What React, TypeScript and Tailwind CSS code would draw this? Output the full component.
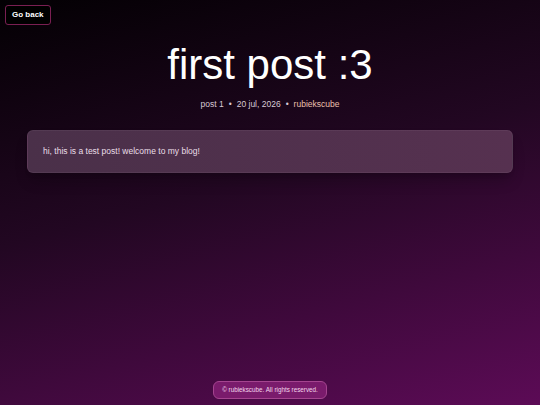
export default function App() {
  return (
    <div className="flex min-h-screen flex-col bg-[linear-gradient(165deg,#030003_0%,#220722_45%,#5c0b56_100%)] font-['Liberation_Sans',Arial,sans-serif] text-white">
      <div className="px-[5px] pt-[5px]">
        <button className="flex h-[20px] items-center rounded-[3px] border border-[#7a1f52] bg-black px-[6px] text-[8px] font-bold text-white">
          Go back
        </button>
      </div>

      <main className="flex flex-1 flex-col items-center px-[27px]">
        <h1 className="mt-[19px] text-[42px] leading-none text-white">first post :3</h1>

        <div className="mt-[12px] flex items-center gap-[5px] text-[8.5px] leading-[12px] text-[#d8cad5]">
          <span>post 1</span>
          <span>•</span>
          <span>20 jul, 2026</span>
          <span>•</span>
          <span className="text-[#ecc0ad]">rubiekscube</span>
        </div>

        <div className="mt-[20px] flex h-[43px] w-full items-center rounded-[6px] border border-white/5 bg-[linear-gradient(90deg,#4a3049,#563150)] px-[15px] shadow-lg shadow-black/20">
          <p className="text-[8.5px] text-[#eadfe8]">hi, this is a test post! welcome to my blog!</p>
        </div>
      </main>

      <footer className="flex justify-center pb-[6px]">
        <div className="flex h-[18px] items-center rounded-[6px] border border-[#a4448f] bg-[#7a1b6c] px-[8px] text-[6.3px] text-[#f3d6ec]">
          © rubiekscube. All rights reserved.
        </div>
      </footer>
    </div>
  );
}
